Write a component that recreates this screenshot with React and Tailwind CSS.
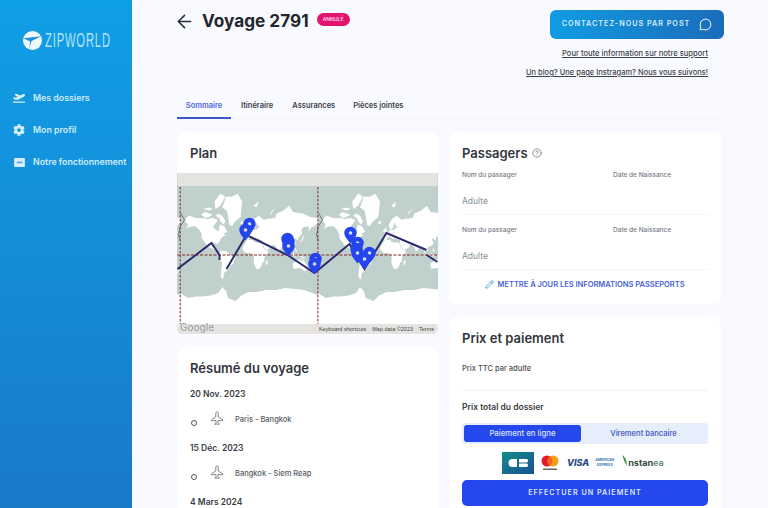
import { ArrowLeft, MessageCircle, CircleHelp, Pencil, Plane } from 'lucide-react'
import { FaPlaneDeparture, FaCog } from 'react-icons/fa'

const TILE = 137.7
const EQUATOR = 82

const px = (lon) => ((lon + 180) * TILE) / 360
const py = (lat) => EQUATOR - 21.9 * Math.log(Math.tan(Math.PI / 4 + (lat * Math.PI) / 360))

const LAND = [
  // amerique du nord
  [[-168,66],[-162,70],[-156,71],[-140,69],[-125,69],[-110,68],[-95,69],[-88,68],[-82,67],[-87,64],[-94,60],[-92,57],[-82,54],[-79,52],[-78,58],[-76,62],[-65,60],[-60,55],[-56,52],[-66,49],[-62,45],[-70,43],[-75,38],[-76,34],[-81,31],[-80,25],[-83,29],[-90,30],[-97,27],[-97,20],[-90,21],[-87,21],[-88,16],[-83,15],[-82,9],[-78,8],[-85,10],[-95,16],[-105,20],[-110,24],[-117,33],[-124,40],[-124,48],[-130,55],[-140,60],[-150,60],[-160,58],[-165,55],[-160,62]],
  [[-125,72],[-115,74],[-105,73],[-95,72],[-105,70],[-115,69]],
  [[-80,73],[-70,71],[-62,66],[-66,62],[-74,65],[-78,69],[-88,71]],
  [[-120,76],[-105,77],[-95,76],[-105,75]],
  [[-90,80],[-75,83],[-62,82],[-75,78],[-88,76]],
  // groenland
  [[-52,62],[-44,60],[-38,65],[-22,70],[-20,76],[-18,80],[-30,83],[-45,82],[-60,82],[-70,77],[-58,75],[-54,69]],
  // amerique du sud
  [[-78,8],[-72,12],[-60,10],[-52,5],[-50,0],[-42,-3],[-35,-6],[-39,-14],[-41,-22],[-48,-26],[-53,-34],[-58,-38],[-65,-42],[-68,-54],[-74,-50],[-73,-38],[-70,-20],[-76,-14],[-81,-5],[-79,2]],
  // afrique
  [[-17,15],[-16,22],[-10,30],[-6,36],[10,37],[11,33],[20,31],[32,31],[37,20],[43,12],[51,11],[47,3],[40,-5],[40,-16],[35,-20],[33,-26],[27,-34],[20,-35],[15,-27],[12,-18],[13,-6],[9,3],[3,6],[-8,5],[-13,9]],
  // eurasie
  [[-9,37],[-9,43],[-1,44],[-3,48],[3,51],[8,54],[9,57],[12,55],[20,55],[28,60],[22,61],[22,65],[17,61],[18,59],[12,56],[6,58],[5,62],[14,68],[25,71],[40,67],[45,68],[68,69],[72,73],[90,75],[105,78],[115,74],[140,73],[160,70],[180,69],[180,64],[170,60],[162,58],[156,52],[156,60],[142,59],[136,54],[140,50],[130,42],[127,35],[122,40],[118,38],[122,30],[120,25],[110,21],[106,18],[109,12],[105,9],[100,13],[103,2],[98,8],[97,16],[91,22],[86,20],[80,12],[77,8],[72,20],[67,25],[57,25],[60,22],[52,16],[44,12],[39,21],[34,28],[35,36],[28,37],[27,41],[23,38],[20,40],[14,45],[18,40],[15,38],[9,44],[3,42],[0,38],[-5,36]],
  // australie, iles
  [[114,-22],[122,-17],[130,-12],[136,-12],[139,-17],[142,-11],[146,-19],[153,-27],[150,-37],[146,-39],[138,-34],[131,-32],[124,-33],[116,-34]],
  [[44,-16],[50,-14],[47,-25],[44,-24]],
  [[-6,50],[1,52],[-3,58],[-6,56]],
  [[-10,52],[-6,52],[-6,55],[-9,54]],
  [[-23,65],[-14,66],[-16,63],[-22,63]],
  [[131,32],[141,36],[142,42],[145,44],[141,45],[138,37]],
  [[96,5],[106,-5],[114,-8],[104,-5]],
  [[110,1],[118,5],[117,-3],[110,-2]],
  [[120,1],[124,0],[122,-5],[120,-4]],
  [[132,-2],[148,-7],[140,-9]],
  [[120,18],[122,18],[125,8],[122,8]],
  [[-84,22],[-75,20],[-80,22]],
  [[168,-45],[175,-37],[178,-39],[170,-46]],
  [[12,78],[25,80],[20,77]],
  [[55,71],[68,77],[58,74]],
  // antarctique
  [[-180,-70],[-160,-74],[-140,-73],[-120,-73],[-100,-72],[-80,-70],[-70,-64],[-60,-68],[-55,-74],[-35,-76],[-20,-72],[0,-69],[20,-69],[45,-67],[70,-67],[95,-65],[120,-66],[145,-67],[165,-70],[180,-72],[180,-86],[-180,-86]],
]

const WORLD = LAND.map((ring) => ring.map(([lon, lat]) => `${px(lon).toFixed(1)},${py(lat).toFixed(1)}`).join(' '))

const PINS = [
  [72, 52], [68, 58], [110, 67], [111, 70], [111, 74], [138, 87], [137, 92],
  [173, 61], [180, 71], [179, 77], [180, 81], [192, 81], [187, 87],
]

function Pin({ x, y }) {
  return (
    <g transform={`translate(${x} ${y})`}>
      <path d="M0 9.500C-4 4.500-6.200 2-6.200-1A6.200 6.200 0 0 1 6.200-1C6.200 2 4 4.500 0 9.500Z" fill="#2445ee" />
      <circle cx="0" cy="-1" r="1.800" fill="#d8e0f8" />
    </g>
  )
}

function WorldMap() {
  const tiles = [-135, 2.700, 140.400]
  return (
    <div className="relative h-[161px] overflow-hidden bg-[#c0d1cd]">
      <svg viewBox="0 0 260 161" className="block h-[161px] w-full">
        {tiles.map((tx) => (
          <g key={tx} transform={`translate(${tx} 0)`}>
            {WORLD.map((points, i) => (
              <polygon key={i} points={points} fill="#ffffff" />
            ))}
            <path d="M0 14V151" fill="none" stroke="#8a2222" strokeWidth="1" strokeDasharray="2.500 1.500" />
          </g>
        ))}
        <path d="M3 40L7 47L3 53L1 62L3 68M141 40L145 47L141 53L139 62L141 68" fill="none" stroke="#5c5c5c" strokeWidth="0.800" />
        <path d="M0 82H260" fill="none" stroke="#8a2222" strokeWidth="1.200" strokeDasharray="3 1.500" />
        <path d="M0 96L34 70L42 82L42 87M49 96L69 62L110 82L137 100L172 71L187 96L209 60L249 77M249 82L260 89" fill="none" stroke="#2d2b6f" strokeWidth="2" />
        {PINS.map(([x, y], i) => (
          <Pin key={i} x={x} y={y} />
        ))}
        <rect x="0" y="0" width="260" height="13" fill="#e5e3df" />
        <rect x="0" y="151" width="260" height="10" fill="#e5e3df" />
      </svg>
      <span className="absolute bottom-[1px] left-[3px] text-[10px] leading-[12px] font-medium text-[#9aa0a0] [text-shadow:0_0_1px_#fff]">Google</span>
      <div className="absolute right-[4px] bottom-[1px] flex gap-[6px] font-['Liberation_Sans',sans-serif] text-[5.500px] leading-[7px] text-[#444]">
        <span>Keyboard shortcuts</span>
        <span>Map data ©2023</span>
        <span>Terms</span>
      </div>
    </div>
  )
}

function NavItem({ icon, label }) {
  return (
    <div className="flex h-[32px] items-center gap-[8px] pl-[13px]">
      <span className="flex w-[12px] shrink-0 justify-center text-[#d6eefc]">{icon}</span>
      <span className="text-[8.800px] font-semibold whitespace-nowrap text-[#cfeafb]">{label}</span>
    </div>
  )
}

function Sidebar() {
  return (
    <aside className="flex h-[508px] w-[132px] shrink-0 flex-col bg-gradient-to-b from-[#0f9fe6] to-[#1879c9]">
      <div className="mt-[29px] flex items-center pl-[23px]">
        <svg viewBox="0 0 20 20" className="h-[19px] w-[19px] shrink-0">
          <circle cx="10" cy="10" r="10" fill="#eef8fe" />
          <path d="M0.500 7.500L19 5.500L9 10.500L6.500 19L7.500 11Z" fill="#1a94dc" />
        </svg>
        <span className="ml-[3px] w-[66px] origin-left scale-x-[0.56] font-['Liberation_Sans',sans-serif] text-[20px] leading-[22px] font-normal tracking-[1.500px] whitespace-nowrap text-[#b9e2f9]">ZIPWORLD</span>
      </div>
      <nav className="mt-[31px]">
        <NavItem icon={<FaPlaneDeparture size={12} />} label="Mes dossiers" />
        <NavItem icon={<FaCog size={12} />} label="Mon profil" />
        <NavItem
          icon={
            <svg viewBox="0 0 12 10" className="h-[9px] w-[11px]">
              <rect width="12" height="10" rx="1" fill="#d6eefc" />
              <rect x="3" y="4" width="6" height="2" fill="#5fa8dc" />
            </svg>
          }
          label="Notre fonctionnement"
        />
      </nav>
    </aside>
  )
}

function Card({ className, children }) {
  return <section className={`rounded-[8px] bg-white ${className}`}>{children}</section>
}

function PassengerRow() {
  return (
    <div className="mb-[9px] h-[46px] border-b border-[#f3f4f7] pt-[1px]">
      <div className="flex text-[6.500px] leading-[10px] font-medium text-[#777b85]">
        <span className="w-[151px]">Nom du passager</span>
        <span>Date de Naissance</span>
      </div>
      <p className="mt-[15px] text-[8.500px] leading-[12px] text-[#8b8f97]">Adulte</p>
    </div>
  )
}

function Leg({ label }) {
  return (
    <div className="mt-[10px] flex h-[26px] items-start">
      <span className="mt-[10px] ml-[1px] h-[6px] w-[6px] rounded-full border border-[#555]" />
      <Plane size={14} strokeWidth={1.200} className="mt-[2px] ml-[13px] -rotate-45 text-[#555b63]" />
      <span className="mt-[4px] ml-[11px] text-[7.500px] leading-[12px] font-medium text-[#555b63]">{label}</span>
    </div>
  )
}

function PayLogos() {
  return (
    <div className="mt-[8px] flex h-[22px] items-center pl-[40px]">
      <svg viewBox="0 0 32 22" className="h-[22px] w-[32px]">
        <defs>
          <linearGradient id="cbGrad" x1="0%" y1="0%" x2="100%" y2="100%">
            <stop offset="0%" stopColor="#0f8f86" />
            <stop offset="100%" stopColor="#1a4f95" />
          </linearGradient>
        </defs>
        <rect width="32" height="22" fill="url(#cbGrad)" />
        <path d="M15 7H10.500A4 4 0 0 0 10.500 15H15ZM17 7H25A2 2 0 0 1 25 10.500H17ZM17 11.500H25A2 2 0 0 1 25 15H17Z" fill="#fff" />
      </svg>
      <svg viewBox="0 0 18 18" className="ml-[7px] h-[18px] w-[18px]">
        <circle cx="6" cy="7" r="5.500" fill="#e5192a" />
        <circle cx="12" cy="7" r="5.500" fill="#f79e1b" />
        <path d="M9 2.400A5.500 5.500 0 0 1 9 11.600A5.500 5.500 0 0 1 9 2.400Z" fill="#f0641e" />
        <rect x="2" y="14.500" width="14" height="1.500" fill="#666" />
      </svg>
      <span className="ml-[8px] text-[9px] leading-[12px] font-extrabold text-[#2b4a86] italic">VISA</span>
      <span className="ml-[6px] text-center text-[3.500px] leading-[5px] font-bold text-[#3d78b8]">
        AMERICAN
        <br />
        EXPRESS
      </span>
      <svg viewBox="0 0 6 12" className="mt-[-5px] ml-[8px] h-[11px] w-[6px]">
        <path d="M0 0C4 3 5 7 5 12L2 6Z" fill="#3e8f3e" />
      </svg>
      <span className="text-[9px] leading-[12px] font-bold text-[#33483f]">
        nstan<span className="text-[#6d8f7d]">ea</span>
      </span>
    </div>
  )
}

export default function App() {
  return (
    <div className="flex h-[508px] w-[768px] overflow-hidden bg-[#f8faff] font-['Inter',sans-serif]">
      <Sidebar />
      <main className="min-w-0 flex-1 pr-[47px] pl-[45px]">
        <header className="flex h-[92px] justify-between">
          <div className="flex h-[42px] items-center">
            <ArrowLeft size={21} strokeWidth={1.700} className="ml-[-3px] text-[#2a2d34]" />
            <h1 className="ml-[7px] text-[17.200px] leading-[24px] font-bold text-[#23262d]">Voyage 2791</h1>
            <span className="mt-[-3px] ml-[8px] flex h-[13px] w-[33px] items-center justify-center rounded-full bg-[#e2146f] text-[5px] font-semibold text-[#ffd9ea]">ANNULÉ</span>
          </div>
          <div className="mr-[-3px] flex flex-col items-end pt-[10px]">
            <button className="flex h-[29px] w-[174px] items-center justify-center gap-[9px] rounded-[6px] bg-gradient-to-r from-[#119ce2] to-[#1a6cbb] text-[7.200px] font-semibold tracking-[1px] text-[#d5eefc]">
              CONTACTEZ-NOUS PAR POST
              <MessageCircle size={13} strokeWidth={1.800} className="text-white" />
            </button>
            <a className="mt-[9px] mr-[16px] text-[7.600px] leading-[11px] font-medium text-[#3f434b] underline">Pour toute information sur notre support</a>
            <a className="mt-[8px] mr-[16px] text-[7.500px] leading-[11px] font-medium text-[#3f434b] underline">Un blog? Une page Instragam? Nous vous suivons!</a>
          </div>
        </header>

        <div className="flex h-[27px] items-start border-b border-[#f2f4f9] text-[7.500px] font-semibold text-[#3b3f47]">
          <span className="mt-[8px] flex h-[19px] w-[54px] justify-center border-b-2 border-[#3d56c8] text-[#4f66d8]">Sommaire</span>
          <span className="mt-[8px] ml-[10px]">Itinéraire</span>
          <span className="mt-[8px] ml-[19px]">Assurances</span>
          <span className="mt-[8px] ml-[18px]">Pièces jointes</span>
        </div>

        <div className="mt-[13px] flex gap-[11px]">
          <div className="flex w-[261px] shrink-0 flex-col gap-[12px]">
            <Card className="overflow-hidden">
              <h2 className="pt-[12px] pl-[13px] text-[13px] leading-[18px] font-semibold text-[#33363c]">Plan</h2>
              <div className="mt-[11px] mb-[1px]">
                <WorldMap />
              </div>
            </Card>
            <Card className="px-[13px] pt-[12px] pb-[20px]">
              <h2 className="text-[13px] leading-[18px] font-semibold text-[#33363c]">Résumé du voyage</h2>
              <p className="mt-[11px] text-[8.500px] leading-[12px] font-semibold text-[#3a3d44]">20 Nov. 2023</p>
              <Leg label="Paris - Bangkok" />
              <p className="mt-[6px] text-[8.500px] leading-[12px] font-semibold text-[#3a3d44]">15 Déc. 2023</p>
              <Leg label="Bangkok - Siem Reap" />
              <p className="mt-[6px] text-[8.500px] leading-[12px] font-semibold text-[#3a3d44]">4 Mars 2024</p>
            </Card>
          </div>

          <div className="flex min-w-0 flex-1 flex-col gap-[13px]">
            <Card className="h-[172px] px-[13px] pt-[12px]">
              <div className="flex items-center gap-[4px]">
                <h2 className="text-[13px] leading-[18px] font-semibold text-[#33363c]">Passagers</h2>
                <CircleHelp size={10} strokeWidth={1.500} className="text-[#55585f]" />
              </div>
              <div className="mt-[7px]">
                <PassengerRow />
                <PassengerRow />
              </div>
              <div className="mt-[2px] flex items-center justify-center gap-[3px] text-[7.500px] leading-[11px] font-semibold text-[#4763d6]">
                <Pencil size={9} strokeWidth={2} className="text-[#2f9ab8]" />
                METTRE À JOUR LES INFORMATIONS PASSEPORTS
              </div>
            </Card>

            <Card className="px-[13px] pt-[12px] pb-[20px]">
              <h2 className="text-[13px] leading-[18px] font-semibold text-[#33363c]">Prix et paiement</h2>
              <p className="mt-[16px] text-[7.500px] leading-[11px] font-medium text-[#4d5058]">Prix TTC par adulte</p>
              <div className="mt-[16px] border-t border-[#f0f1f5]" />
              <p className="mt-[10px] text-[8.500px] leading-[12px] font-semibold text-[#3a3d44]">Prix total du dossier</p>
              <div className="mt-[10px] flex h-[21px] rounded-[3px] bg-[#e6eefc] p-[2px] text-[7.800px] font-medium">
                <span className="flex w-[117px] items-center justify-center rounded-[3px] bg-[#2547ee] text-[#dbe5ff]">Paiement en ligne</span>
                <span className="flex flex-1 items-center justify-center text-[7.500px] font-semibold text-[#4d66c4]">Virement bancaire</span>
              </div>
              <PayLogos />
              <button className="mt-[6px] h-[26px] w-full rounded-[5px] bg-[#2547ee] text-[7.200px] font-semibold tracking-[1px] text-[#dbe5ff]">EFFECTUER UN PAIEMENT</button>
            </Card>
          </div>
        </div>
      </main>
    </div>
  )
}
